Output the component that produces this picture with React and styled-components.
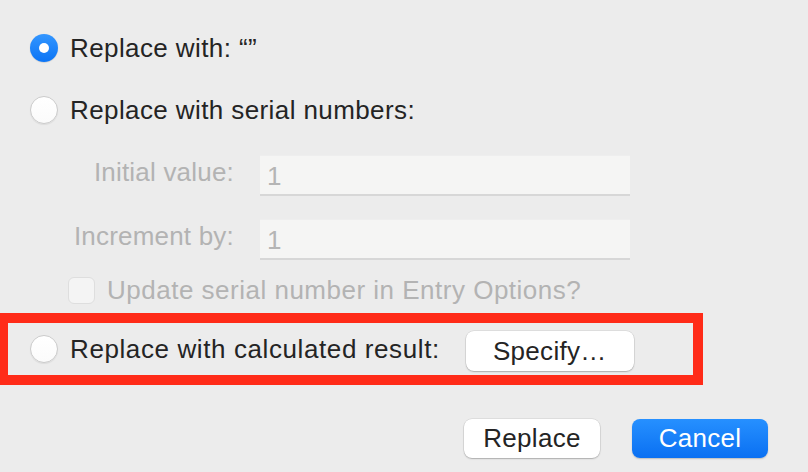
import React from 'react';
import styled, { createGlobalStyle, css } from 'styled-components';

const Global = createGlobalStyle`
  html, body { margin: 0; padding: 0; background: #ececec; }
  body {
    width: 808px; height: 472px; overflow: hidden;
    font-family: "Liberation Sans", Arial, sans-serif;
  }
`;

const Dialog = styled.div`
  width: 808px;
  height: 472px;
  box-sizing: border-box;
  padding-top: 34px;
  display: flex;
  flex-direction: column;
  font-size: 26px;
  letter-spacing: 0.4px;
  color: #242424;
`;

const OptionRow = styled.div`
  display: flex;
  align-items: center;
  gap: 12px;
  height: 28px;
  padding-left: 30px;
  margin-top: ${(p) => p.$mt || 0}px;
`;

const Radio = styled.span`
  width: 28px;
  height: 28px;
  flex: none;
  border-radius: 50%;
  box-sizing: border-box;
  display: flex;
  align-items: center;
  justify-content: center;
  ${(p) =>
    p.$checked
      ? css`
          background: linear-gradient(#3396ff, #0b74f5);
          box-shadow: 0 0.5px 1px rgba(0, 0, 0, 0.2);
          &::after {
            content: '';
            width: 10px;
            height: 10px;
            border-radius: 50%;
            background: #fff;
          }
        `
      : css`
          background: linear-gradient(#ffffff, #fbfbfb);
          border: 1px solid #cbcbcb;
          box-shadow: 0 1px 1px rgba(0, 0, 0, 0.07);
        `}
`;

const OptionText = styled.span`
  letter-spacing: ${(p) => p.$ls ?? 0.4}px;
`;

const SerialFields = styled.div`
  display: grid;
  grid-template-columns: 204px 370px;
  column-gap: 26px;
  row-gap: 23px;
  padding-left: 30px;
  margin-top: 31px;
`;

const FieldLabel = styled.span`
  align-self: start;
  text-align: right;
  line-height: 34px;
  letter-spacing: 0.2px;
  color: #b3b3b3;
`;

const TextInput = styled.div`
  height: 41px;
  box-sizing: border-box;
  background: #f5f5f4;
  border-bottom: 2px solid #d7d7d7;
  box-shadow: inset 0 1px 0 #eeeeee;
  padding: 6px 0 0 7px;
  color: #b5b5b5;
`;

const CheckRow = styled.div`
  display: flex;
  align-items: center;
  gap: 12px;
  height: 27px;
  padding-left: 68px;
  margin-top: 17px;
  color: #b3b3b3;
  letter-spacing: 0.5px;
`;

const Checkbox = styled.span`
  width: 27px;
  height: 27px;
  flex: none;
  box-sizing: border-box;
  border-radius: 6px;
  background: #f4f4f4;
  border: 1px solid #dedede;
`;

const Highlight = styled.div`
  width: 703px;
  height: 72px;
  box-sizing: border-box;
  margin-top: 9px;
  border: 10px solid #ff2b18;
  border-left-width: 8px;
  display: flex;
  align-items: center;
  padding-left: 22px;
  gap: 12px;
`;

const PushButton = styled.button`
  width: ${(p) => p.$w}px;
  height: ${(p) => p.$h}px;
  flex: none;
  border: none;
  border-radius: 8px;
  font: inherit;
  letter-spacing: 0.3px;
  padding: 0;
  margin-top: ${(p) => p.$mt || 0}px;
  margin-left: ${(p) => p.$ml || 0}px;
  ${(p) =>
    p.$primary
      ? css`
          background: linear-gradient(#2690ff, #0a70f2);
          color: #fff;
          box-shadow: 0 1px 1.5px rgba(0, 0, 0, 0.2);
        `
      : css`
          background: #fff;
          color: #242424;
          box-shadow: 0 0 0 0.5px rgba(0, 0, 0, 0.12), 0 1px 1.5px rgba(0, 0, 0, 0.22);
        `}
`;

const Footer = styled.div`
  display: flex;
  justify-content: flex-end;
  gap: 32px;
  padding-right: 40px;
  margin-top: 34px;
`;

export default function App() {
  return (
    <>
      <Global />
      <Dialog>
        <OptionRow>
          <Radio $checked />
          <OptionText>Replace with: “”</OptionText>
        </OptionRow>
        <OptionRow $mt={34}>
          <Radio />
          <OptionText>Replace with serial numbers:</OptionText>
        </OptionRow>
        <SerialFields>
          <FieldLabel>Initial value:</FieldLabel>
          <TextInput>1</TextInput>
          <FieldLabel>Increment by:</FieldLabel>
          <TextInput>1</TextInput>
        </SerialFields>
        <CheckRow>
          <Checkbox />
          <span>Update serial number in Entry Options?</span>
        </CheckRow>
        <Highlight>
          <Radio />
          <OptionText $ls={0.6}>Replace with calculated result:</OptionText>
          <PushButton $w={168} $h={40} $mt={4} $ml={14}>Specify…</PushButton>
        </Highlight>
        <Footer>
          <PushButton $w={136} $h={39}>Replace</PushButton>
          <PushButton $w={136} $h={39} $primary>Cancel</PushButton>
        </Footer>
      </Dialog>
    </>
  );
}
